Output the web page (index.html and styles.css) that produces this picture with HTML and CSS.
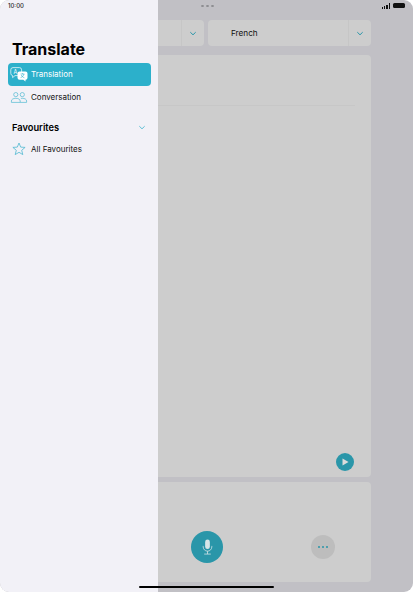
FILE: index.html
```html
<!DOCTYPE html>
<html lang="en">
<head>
  <meta charset="UTF-8">
  <meta name="viewport" content="width=device-width, initial-scale=1">
  <title>Translate</title>
  <link rel="stylesheet" href="styles.css">
</head>
<body>

  <div class="app">

    <!-- SIDEBAR -->
    <aside class="sidebar">
      <h1>Translate</h1>
      <a href="#" class="side-item active">
        <svg class="side-icon" viewBox="0 0 18 15" fill="none">
          <path d="M3 .6h6.400a2.200 2.200 0 0 1 2.200 2.200v3.600a2.200 2.200 0 0 1-2.200 2.200H5L2.600 10.600V8.600A2.200 2.200 0 0 1 .8 6.400V2.800A2.200 2.200 0 0 1 3 .6z" stroke="#fff" stroke-width=".7"/>
          <text x="3.400" y="6.600" class="icon-a">A</text>
          <path d="M9.500 4.400h6a2 2 0 0 1 2 2v4.400a2 2 0 0 1-2 2v1.800l-2.200-1.800H9.500a2 2 0 0 1-2-2V6.400a2 2 0 0 1 2-2z" fill="#fff"/>
          <path d="M10.600 7h3.800M12.500 6.200V7M14 7c-.4 1.800-1.800 3-3.400 3.600M11.200 8c.5 1.200 1.800 2.300 3.200 2.800" stroke="#2cb0cb" stroke-width=".6"/>
        </svg>
        <span>Translation</span>
      </a>
      <a href="#" class="side-item">
        <svg class="side-icon people" viewBox="0 0 16 11" fill="none" stroke="#4fb9d1" stroke-width=".7">
          <circle cx="4.800" cy="2.600" r="2.100"/>
          <circle cx="11.300" cy="2.600" r="2.100"/>
          <path d="M.4 10.400V9c0-1.700 2-2.700 4.400-2.700S9.200 7.300 9.200 9v1.400z"/>
          <path d="M9.900 6.400c.4-.1.900-.1 1.400-.1 2.400 0 4.300 1 4.300 2.700v1.400H9.200"/>
        </svg>
        <span>Conversation</span>
      </a>
      <div class="side-heading">
        <h2>Favourites</h2>
        <svg class="chevron" viewBox="0 0 8 5" fill="none"><path d="M1.300 1.200L4 3.800l2.700-2.600" stroke="#4fb9d1" stroke-width=".9"/></svg>
      </div>
      <a href="#" class="side-item">
        <svg class="side-icon star" viewBox="0 0 14 14" fill="none"><path d="M7 1l1.700 4.100 4.400.3-3.400 2.900 1.100 4.300L7 10.300l-3.800 2.300 1.100-4.300L.9 5.400l4.400-.3z" stroke="#4fb9d1" stroke-width=".8" stroke-linejoin="round"/></svg>
        <span>All Favourites</span>
      </a>
    </aside>

    <!-- MAIN -->
    <main class="main">
      <div class="lang-row">
        <div class="lang-select first">
          <span class="lang-name"></span>
          <span class="lang-arrow">
            <svg class="chevron" viewBox="0 0 8 5" fill="none"><path d="M1.300 1.200L4 3.800l2.700-2.600" stroke="#2a96a9" stroke-width="1"/></svg>
          </span>
        </div>
        <div class="lang-select">
          <span class="lang-name">French</span>
          <span class="lang-arrow">
            <svg class="chevron" viewBox="0 0 8 5" fill="none"><path d="M1.300 1.200L4 3.800l2.700-2.600" stroke="#2a96a9" stroke-width="1"/></svg>
          </span>
        </div>
      </div>

      <section class="card text-card">
        <div class="text-line"></div>
        <button class="play-btn" aria-label="Play">
          <svg viewBox="0 0 8 8"><path d="M1.500.6l6 3.400-6 3.400z" fill="#dcdcdc"/></svg>
        </button>
      </section>

      <section class="card controls">
        <button class="mic-btn" aria-label="Speak">
          <svg viewBox="0 0 14 20" fill="none" stroke="#d8e6e8">
            <rect x="4" y=".6" width="6" height="12" rx="3" fill="#d8e6e8" stroke="none"/>
            <path d="M1.500 8.600v1.200a5.500 5.500 0 0 0 11 0V8.600M7 15.300v3.600M2.800 19h8.400" stroke-width="1"/>
          </svg>
        </button>
        <button class="more-btn" aria-label="More"><i></i><i></i><i></i></button>
      </section>
    </main>

    <!-- STATUS BAR -->
    <div class="status-bar">
      <span class="time">10:00</span>
      <span class="dots"><i></i><i></i><i></i></span>
      <span class="status-icons">
        <span class="signal"><i></i><i></i><i></i><i></i></span>
        <span class="battery"></span>
      </span>
    </div>

    <div class="home-bar"></div>
  </div>

</body>
</html>
```

FILE: styles.css
```css
/* base */
html, body {
  margin: 0; padding: 0;
  width: 413px; height: 592px;
  overflow: hidden;
  background: #fff;
  font-family: 'Inter', 'Liberation Sans', sans-serif;
  color: #000;
}
a { text-decoration: none; color: inherit; }
button { border: none; padding: 0; cursor: pointer; }

.app {
  position: relative;
  display: flex;
  width: 413px; height: 592px;
  background: #c1c0c5;
  border-radius: 9px;
  overflow: hidden;
}

/* sidebar */
.sidebar {
  flex: 0 0 158px;
  box-sizing: border-box;
  background: #f2f1f7;
  padding: 39px 7px 0 8px;
}
.sidebar h1 {
  margin: 0 0 4px 4px;
  font-size: 16px; line-height: 20px; font-weight: 700;
}
.side-item {
  display: flex; align-items: center;
  box-sizing: border-box;
  height: 22px;
  border-radius: 4px;
  font-size: 8px;
  color: #111;
}
.side-item.active {
  height: 23px;
  padding-bottom: 1px;
  background: #2cb0cb;
  color: #fff;
}
.side-icon {
  flex: 0 0 18px;
  width: 18px; height: 15px;
  margin: 0 3px 0 2px;
}
.side-icon.people { height: 11px; }
.side-icon.star { height: 14px; }
.icon-a { font-size: 5.500px; fill: #fff; font-family: 'Inter', sans-serif; }
.side-heading {
  display: flex; align-items: center; justify-content: space-between;
  margin: 12px 5px 4px 4px;
  height: 14px;
}
.side-heading h2 {
  margin: 0;
  font-size: 9.300px; font-weight: 600;
}
.chevron { width: 8px; height: 5px; display: block; }

/* main */
.main {
  flex: 1;
  min-width: 0;
  box-sizing: border-box;
  padding: 20px 42px 10px 0;
  display: flex; flex-direction: column;
}
.lang-row {
  display: flex; gap: 4px;
  height: 26px;
  margin-bottom: 9px;
}
.lang-select {
  flex: 1;
  display: flex;
  background: #cdcdcd;
  border-radius: 4px;
}
.lang-select.first {
  flex: 0 0 46px;
  border-radius: 0 4px 4px 0;
}
.lang-name {
  flex: 1;
  padding-left: 23px;
  font-size: 8.200px; line-height: 26px;
  color: #111;
}
.lang-arrow {
  flex: 0 0 22px;
  display: flex; align-items: center; justify-content: center;
  border-left: 1px solid #c6c6c6;
}
.card {
  background: #cdcdcd;
  border-radius: 0 4px 4px 0;
}
.text-card {
  position: relative;
  height: 422px;
  margin-bottom: 5px;
}
.text-line {
  height: 1px;
  margin-right: 16px;
  position: relative; top: 50px;
  background: #c7c7c7;
}
.play-btn {
  position: absolute; right: 17.500px; bottom: 6px;
  width: 18px; height: 18px;
  border-radius: 50%;
  background: #2a96a9;
  display: flex; align-items: center; justify-content: center;
}
.play-btn svg { width: 8px; height: 8px; margin-left: 1px; }
.controls {
  flex: 1;
  display: flex; align-items: flex-end;
  padding: 0 36px 19px 33px;
  justify-content: space-between;
}
.mic-btn {
  width: 32px; height: 32px;
  border-radius: 50%;
  background: #2a96a9;
  display: flex; align-items: center; justify-content: center;
}
.mic-btn svg { width: 11px; height: 16px; }
.more-btn {
  width: 24px; height: 24px;
  margin-bottom: 4px;
  border-radius: 50%;
  background: #bdbdbd;
  display: flex; align-items: center; justify-content: center; gap: 2px;
}
.more-btn i {
  width: 2px; height: 2px;
  border-radius: 50%;
  background: #2a96a9;
}

/* status bar */
.status-bar {
  position: absolute; top: 0; left: 0; right: 0;
  height: 11px;
  padding: 0 8px;
  display: flex; align-items: center; justify-content: space-between;
  box-sizing: border-box;
}
.time { font-size: 6px; font-weight: 500; color: #222; }
.dots {
  position: absolute; left: 201px; top: 5px;
  display: flex; gap: 2px;
}
.dots i {
  width: 3px; height: 2px;
  border-radius: 50%;
  background: #8b8b8f;
}
.status-icons { display: flex; align-items: center; gap: 3px; }
.signal { display: flex; align-items: flex-end; gap: 1px; height: 6px; }
.signal i { width: 1.300px; background: #111; }
.signal i:nth-child(1) { height: 2px; }
.signal i:nth-child(2) { height: 3px; }
.signal i:nth-child(3) { height: 4px; }
.signal i:nth-child(4) { height: 6px; }
.battery {
  width: 12px; height: 5px;
  border-radius: 1.500px;
  background: #111;
}

/* home indicator */
.home-bar {
  position: absolute; left: 139px; bottom: 4px;
  width: 135px; height: 2px;
  border-radius: 1px;
  background: #000;
}
```
